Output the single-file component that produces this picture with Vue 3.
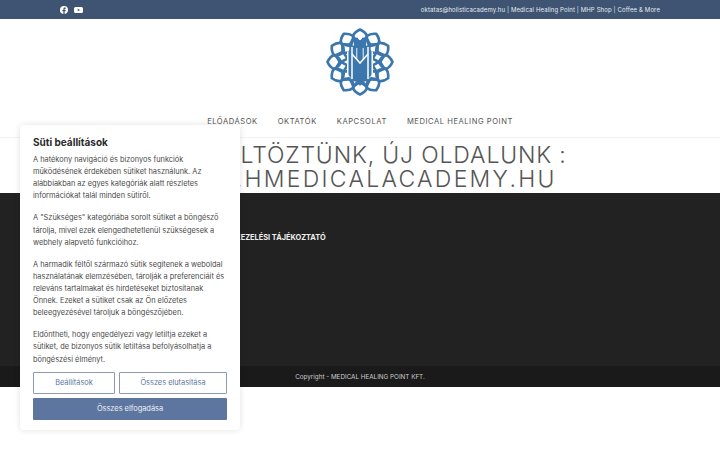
<script setup>
const outer = Array.from({ length: 12 }, (_, i) => i * 30)
const inner = Array.from({ length: 12 }, (_, i) => i * 30 + 15)
const paragraphs = [
  ['A hatékony navigáció és bizonyos funkciók', 'működésének érdekében sütiket használunk. Az', 'alábbiakban az egyes kategóriák alatt részletes', 'információkat talál minden sütiről.'],
  ['A "Szükséges" kategóriába sorolt sütiket a böngésző', 'tárolja, mivel ezek elengedhetetlenül szükségesek a', 'webhely alapvető funkcióihoz.'],
  ['A harmadik féltől származó sütik segítenek a weboldal', 'használatának elemzésében, tárolják a preferenciáit és', 'releváns tartalmakat és hirdetéseket biztosítanak', 'Önnek. Ezeket a sütiket csak az Ön előzetes', 'beleegyezésével tároljuk a böngészőjében.'],
  ['Eldöntheti, hogy engedélyezi vagy letiltja ezeket a', 'sütiket, de bizonyos sütik letiltása befolyásolhatja a', 'böngészési élményt.']
]
const nav = ['ELŐADÁSOK', 'OKTATÓK', 'KAPCSOLAT', 'MEDICAL HEALING POINT']
</script>

<template>
  <div class="page">
    <div class="topbar">
      <div class="social">
        <svg width="8" height="8" viewBox="0 0 16 16"><path fill="#fff" d="M16 8a8 8 0 1 0-9.25 7.9v-5.59H4.72V8h2.03V6.24c0-2 1.19-3.11 3.02-3.11.87 0 1.79.16 1.79.16v1.97h-1.01c-.99 0-1.3.62-1.3 1.25V8h2.22l-.35 2.31H9.25v5.59A8 8 0 0 0 16 8z"/></svg>
        <svg width="9" height="8" viewBox="0 0 18 16"><path fill="#fff" fill-rule="evenodd" d="M3 2h12a3 3 0 0 1 3 3v6a3 3 0 0 1-3 3H3a3 3 0 0 1-3-3V5a3 3 0 0 1 3-3zm4.5 3.5v5L12 8z"/></svg>
      </div>
      <div class="toplinks">oktatas@holisticacademy.hu | Medical Healing Point | MHP Shop | Coffee &amp; More</div>
    </div>

    <header class="header">
      <svg class="logo" width="70" height="70" viewBox="-35 -35 70 70">
        <g fill="none" stroke="#3b77ad" stroke-width="2.7" stroke-linejoin="round">
          <path v-for="a in outer" :key="a" :transform="`rotate(${a})`" d="M0 -32.5 Q5.5 -30 7 -26 Q5 -21 0 -19 Q-5 -21 -7 -26 Q-5.5 -30 0 -32.5 Z"/>
          <path v-for="a in inner" :key="'i' + a" :transform="`rotate(${a})`" d="M0 -25 L5.6 -19 L0 -13 L-5.6 -19 Z"/>
        </g>
        <path fill="#fff" d="M-13 -10 L-5 -15 L5 -15 L13 -10 L13 13 L5 20 L-5 20 L-13 13 Z"/>
        <path fill="#3b77ad" d="M-3 -25 L0 -20 L3 -25 L6 -21 L6 -17 L11.5 -11 L11.5 13 L7 19 L3 20 L0 24 L-3 20 L-7 19 L-11.5 13 L-11.5 -11 L-6 -17 L-6 -21 Z"/>
        <g fill="none" stroke="#fff" stroke-width="1.5">
          <path d="M-8 -15 V17 M8 -15 V17"/>
          <path d="M-8 -8 L0 1 L8 -8"/>
          <path d="M-3.2 -14 L-3.2 -3 M3.2 -14 L3.2 -3" stroke-width="0.9"/>
        </g>
      </svg>
      <nav class="nav">
        <a v-for="item in nav" :key="item">{{ item }}</a>
      </nav>
    </header>

    <h1 class="title">
      <span class="line-a">MEGKÖLTÖZTÜNK, ÚJ OLDALUNK :</span>
      <span class="line-b">WWW.HMEDICALACADEMY.HU</span>
    </h1>

    <section class="dark">
      <div class="darklink">ADATKEZELÉSI TÁJÉKOZTATÓ</div>
    </section>
    <footer class="copy">Copyright - MEDICAL HEALING POINT KFT.</footer>

    <aside class="cookie">
      <h2>Süti beállítások</h2>
      <p v-for="(lines, i) in paragraphs" :key="i">
        <span v-for="l in lines" :key="l" class="ln">{{ l }}</span>
      </p>
      <div class="row">
        <button class="ghost narrow">Beállítások</button>
        <button class="ghost wide">Összes elutasítása</button>
      </div>
      <button class="solid">Összes elfogadása</button>
    </aside>
  </div>
</template>

<style>
html, body { margin: 0; background: #fff; }
</style>

<style scoped>
.page {
  position: relative;
  width: 720px;
  height: 450px;
  overflow: hidden;
  font-family: Inter, "Open Sans", sans-serif;
  color: #333;
}
.topbar {
  height: 19px;
  background: #3e5472;
  padding: 0 60px;
  display: flex;
  align-items: center;
  justify-content: space-between;
}
.social { display: flex; gap: 6px; align-items: center; }
.social svg { display: block; }
.toplinks { font-size: 6px; color: #e6ebf2; letter-spacing: 0.02em; }
.header {
  height: 119px;
  border-bottom: 1px solid #f1f1f1;
  display: flex;
  flex-direction: column;
  align-items: center;
  box-sizing: border-box;
}
.logo { margin-top: 8px; display: block; }
.nav { display: flex; gap: 20px; margin-top: 19px; }
.nav a { font-size: 7.6px; letter-spacing: 0.54px; color: #555; line-height: 12px; }
.title {
  margin: 0;
  height: 55px;
  padding-top: 5px;
  box-sizing: border-box;
  text-align: center;
  font-size: 23px;
  line-height: 24px;
  font-weight: 300;
  color: #555;
}
.line-a, .line-b { display: block; white-space: nowrap; }
.line-a { letter-spacing: 0.84px; }
.line-b { letter-spacing: 2.26px; }
.dark {
  height: 173px;
  background: #222;
  padding: 40px 0 0 215px;
  box-sizing: border-box;
}
.darklink { font-size: 7.4px; font-weight: 700; color: #eee; line-height: 10px; }
.copy {
  height: 21px;
  background: #1a1a1a;
  color: #ccc;
  font-size: 6.3px;
  line-height: 22px;
  text-align: center;
}
.cookie {
  position: absolute;
  left: 20px;
  top: 125px;
  width: 220px;
  height: 305px;
  box-sizing: border-box;
  background: #fff;
  border-radius: 4px;
  box-shadow: 0 0 6px rgba(0, 0, 0, 0.12);
  padding: 10px 13px 0;
}
.cookie h2 {
  margin: 0 0 5px;
  font-size: 10px;
  line-height: 14px;
  font-weight: 700;
  color: #2a2a2a;
}
.cookie p {
  margin: 0 0 9.8px;
  font-size: 7.4px;
  line-height: 12.15px;
  color: #4a4a4a;
}
.ln { display: block; white-space: nowrap; }
.row { display: flex; gap: 4px; margin-top: -4px; }
button {
  font-family: inherit;
  font-size: 7.4px;
  height: 22px;
  border-radius: 1px;
  box-sizing: border-box;
  padding: 0;
}
.ghost { background: #fff; border: 1.5px solid #8f99ad; color: #5d76a0; }
.narrow { width: 82px; }
.wide { flex: 1; }
.solid {
  display: block;
  margin-top: 4px;
  width: 100%;
  background: #5d76a0;
  border: none;
  color: #eef1f6;
}
</style>
